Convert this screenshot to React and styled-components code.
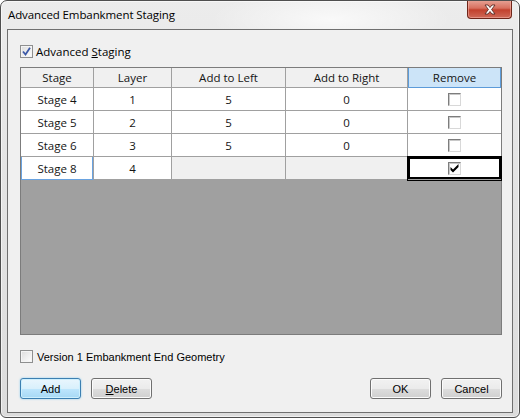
import React from "react";
import styled, { createGlobalStyle } from "styled-components";

const GlobalStyle = createGlobalStyle`
  html, body {
    margin: 0;
    padding: 0;
    background: #ffffff;
  }
  #root {
    width: 520px;
    height: 418px;
  }
`;

const Window = styled.div`
  box-sizing: border-box;
  width: 520px;
  height: 418px;
  border: 1px solid #4f4f4f;
  border-radius: 7px 7px 6px 6px;
  background:
    radial-gradient(ellipse 120px 30px at 330px 18px, rgba(255, 255, 255, 0.7), rgba(255, 255, 255, 0) 100%),
    linear-gradient(to bottom, #ececec 0%, #e4e4e4 40%, #dcdcdc 100%);
  box-shadow: inset 0 0 0 1px rgba(255, 255, 255, 0.6);
  display: flex;
  flex-direction: column;
  overflow: hidden;
`;

const TitleBar = styled.div`
  height: 28px;
  display: flex;
  align-items: flex-start;
  justify-content: space-between;
  padding: 0 7px 0 7px;
`;

const Title = styled.div`
  font-family: "Open Sans", "Noto Sans", sans-serif;
  font-size: 11.5px;
  color: #000;
  line-height: 28px;
  letter-spacing: -0.1px;
`;

const CloseButton = styled.div`
  width: 43px;
  height: 18px;
  margin-top: -1px;
  border: 1px solid #6e2519;
  border-top: none;
  border-radius: 0 0 4px 4px;
  background: linear-gradient(to bottom, #e8a598 0%, #d8705f 45%, #c2412d 55%, #cf6a58 100%);
  box-shadow: inset 0 0 0 1px rgba(255, 200, 190, 0.45);
  display: flex;
  align-items: center;
  justify-content: center;
`;

const Client = styled.div`
  flex: 1;
  margin: 0 6px 4px 6px;
  border: 1px solid #6f6f6f;
  background: #f0f0f0;
  display: flex;
  flex-direction: column;
  padding: 15px 10px 0 12px;
`;

const CheckRow = styled.label`
  display: flex;
  align-items: center;
  gap: ${(p) => p.$gap}px;
  height: 13px;
  font-family: ${(p) =>
    p.$classic ? '"Liberation Sans", Arial, sans-serif' : '"Open Sans", "Noto Sans", sans-serif'};
  font-size: ${(p) => (p.$classic ? 11 : 11.5)}px;
  color: #000;
  margin-top: ${(p) => p.$top || 0}px;
  white-space: nowrap;
`;

const Box = styled.span`
  box-sizing: border-box;
  width: 13px;
  height: 13px;
  border: 1px solid #8e8f8f;
  background: linear-gradient(135deg, #dcdcdc 0%, #f4f4f4 70%, #ffffff 100%);
  box-shadow: inset 0 0 0 1px #f4f4f4;
  display: flex;
  align-items: center;
  justify-content: center;
  flex: none;
`;

const U = styled.span`
  text-decoration: underline;
`;

const Grid = styled.div`
  box-sizing: border-box;
  width: 482px;
  height: 268px;
  margin-top: 9px;
  border: 1px solid #7c7c7c;
  background: #a0a0a0;
`;

const Table = styled.div`
  display: grid;
  grid-template-columns: 73px 78px 114px 122px 93px;
  grid-auto-rows: 23px;
  grid-template-rows: 20px;
`;

const Cell = styled.div`
  box-sizing: border-box;
  border-right: ${(p) => (p.$last ? "none" : "1px solid #a0a0a0")};
  border-bottom: 1px solid #a0a0a0;
  background: ${(p) => (p.$head ? "#f0f0f0" : p.$empty ? "#f0f0f0" : "#ffffff")};
  font-family: "Open Sans", "Noto Sans", sans-serif;
  font-size: 11.5px;
  color: #141414;
  display: flex;
  align-items: center;
  justify-content: center;
  position: relative;
`;

const SelectedHead = styled(Cell)`
  background: #cce4f8;
  border: 1px solid #5c9bd9;
  border-top: none;
`;

const FocusCell = styled(Cell)`
  box-shadow: inset 1px 0 0 #6aa3e0, inset -1px 0 0 #6aa3e0;
  border-bottom-color: #6aa3e0;
`;

const CurrentCell = styled(Cell)`
  box-shadow: 0 0 0 1px #000, inset 0 0 0 2px #000;
  z-index: 1;
`;

const GridBox = styled.span`
  box-sizing: border-box;
  width: 13px;
  height: 13px;
  border-top: 1px solid #7d7d7d;
  border-left: 1px solid #7d7d7d;
  border-right: 1px solid #d8d8d8;
  border-bottom: 1px solid #d8d8d8;
  box-shadow: inset 1px 1px 0 #c8c8c8;
  background: #ffffff;
  display: flex;
  align-items: center;
  justify-content: center;
`;

const ButtonRow = styled.div`
  display: flex;
  align-items: center;
  gap: 10px;
  margin-top: 15px;
  padding-right: 0px;
`;

const Spacer = styled.div`
  flex: 1;
`;

const Button = styled.div`
  box-sizing: border-box;
  width: 61px;
  height: 21px;
  border: 1px solid ${(p) => (p.$default ? "#3c7fb1" : "#707070")};
  border-radius: 3px;
  background: ${(p) =>
    p.$default
      ? "linear-gradient(to bottom, #e9f6fd 0%, #d9f0fc 50%, #bee6fd 51%, #a7d9f5 100%)"
      : "linear-gradient(to bottom, #f2f2f2 0%, #ebebeb 50%, #dddddd 51%, #cfcfcf 100%)"};
  box-shadow: ${(p) =>
    p.$default ? "inset 0 0 0 1px #cdeffd, 0 0 2px #7ec8f0" : "inset 0 0 0 1px #fbfbfb"};
  font-family: "Liberation Sans", Arial, sans-serif;
  font-size: 11px;
  color: #000;
  display: flex;
  align-items: center;
  justify-content: center;
`;

const rows = [
  { stage: "Stage 4", layer: "1", left: "5", right: "0" },
  { stage: "Stage 5", layer: "2", left: "5", right: "0" },
  { stage: "Stage 6", layer: "3", left: "5", right: "0" },
];

const BlueCheck = () => (
  <svg width="9" height="9" viewBox="0 0 9 9">
    <path d="M1 4.5 L3.5 7.5 L8 0.8" fill="none" stroke="#3d5aa8" strokeWidth="1.8" />
  </svg>
);

const BlackCheck = () => (
  <svg width="9" height="9" viewBox="0 0 9 9">
    <path d="M0.5 3 L3 5.5 L8.5 0 L8.5 3 L3 8.5 L0.5 6 Z" fill="#000" />
  </svg>
);

const CloseX = () => (
  <svg width="14" height="11" viewBox="0 0 14 11">
    <path
      d="M2 1 L5 1 L7 3.5 L9 1 L12 1 L8.6 5.5 L12 10 L9 10 L7 7.5 L5 10 L2 10 L5.4 5.5 Z"
      fill="#ffffff"
      stroke="#5a2a24"
      strokeWidth="0.9"
      strokeLinejoin="round"
    />
  </svg>
);

export default function App() {
  return (
    <>
      <GlobalStyle />
      <Window>
        <TitleBar>
          <Title>Advanced Embankment Staging</Title>
          <CloseButton>
            <CloseX />
          </CloseButton>
        </TitleBar>
        <Client>
          <CheckRow $gap={3}>
            <Box>
              <BlueCheck />
            </Box>
            <span>
              Advanced <U>S</U>taging
            </span>
          </CheckRow>

          <Grid>
            <Table>
              <Cell $head>Stage</Cell>
              <Cell $head>Layer</Cell>
              <Cell $head>Add to Left</Cell>
              <Cell $head>Add to Right</Cell>
              <SelectedHead $head $last>
                Remove
              </SelectedHead>

              {rows.map((r) => (
                <React.Fragment key={r.stage}>
                  <Cell>{r.stage}</Cell>
                  <Cell>{r.layer}</Cell>
                  <Cell>{r.left}</Cell>
                  <Cell>{r.right}</Cell>
                  <Cell $last>
                    <GridBox />
                  </Cell>
                </React.Fragment>
              ))}

              <FocusCell>Stage 8</FocusCell>
              <Cell>4</Cell>
              <Cell $empty />
              <Cell $empty />
              <CurrentCell $last>
                <GridBox>
                  <BlackCheck />
                </GridBox>
              </CurrentCell>
            </Table>
          </Grid>

          <CheckRow $gap={4} $classic $top={15}>
            <Box />
            <span>Version 1 Embankment End Geometry</span>
          </CheckRow>

          <ButtonRow>
            <Button $default>Add</Button>
            <Button>
              <span>
                <U>D</U>elete
              </span>
            </Button>
            <Spacer />
            <Button>OK</Button>
            <Button>Cancel</Button>
          </ButtonRow>
        </Client>
      </Window>
    </>
  );
}
